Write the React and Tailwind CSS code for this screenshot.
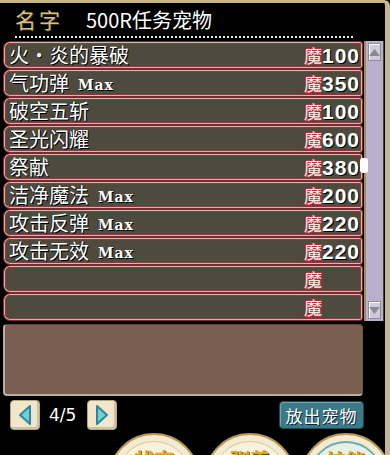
import React from "react";

const skills = [
  { name: "火・炎的暴破", max: false, mp: "100" },
  { name: "气功弹", max: true, mp: "350" },
  { name: "破空五斩", max: false, mp: "100" },
  { name: "圣光闪耀", max: false, mp: "600" },
  { name: "祭献", max: false, mp: "380" },
  { name: "洁净魔法", max: true, mp: "200" },
  { name: "攻击反弹", max: true, mp: "220" },
  { name: "攻击无效", max: true, mp: "220" },
  { name: "", max: false, mp: "" },
  { name: "", max: false, mp: "" },
];

const cjk = { fontFamily: '"Noto Sans CJK SC", "Noto Sans", sans-serif' };

function SkillRow({ s }) {
  return (
    <div className="h-[28px] flex items-center rounded-l-[7px] rounded-r-[3px] border border-[#7e2830] bg-[#4e4a3d] shadow-[inset_0_0_0_1px_#e2b0b0,inset_0_0_0_2px_#8c3a40] pl-[5px] pr-[4px]">
      <span
        className="text-[20px] leading-none text-white [text-shadow:1px_1px_0_#000,-1px_0_0_#2a2a2a]"
        style={cjk}
      >
        {s.name}
      </span>
      {s.max && (
        <span
          className="ml-[9px] mt-[3px] text-[14px] font-bold leading-none text-white tracking-[1px] [text-shadow:1px_1px_0_#000]"
          style={{ fontFamily: '"DejaVu Serif", serif' }}
        >
          Max
        </span>
      )}
      <div className="ml-auto flex items-center">
        <span
          className="text-[18px] leading-none text-[#fbeaea] [text-shadow:1px_0_0_#b0303a,-1px_0_0_#b0303a,0_1px_0_#b0303a,0_-1px_0_#b0303a]"
          style={cjk}
        >
          魔
        </span>
        <span
          className="w-[36px] text-[21px] font-bold leading-none text-white tracking-[1px] [text-shadow:1px_1px_0_#000]"
          style={{ fontFamily: '"Liberation Sans", sans-serif' }}
        >
          {s.mp}
        </span>
      </div>
    </div>
  );
}

function ArrowBtn({ dir }) {
  return (
    <div className="w-[30px] h-[30px] rounded-[4px] bg-[#efe6cc] border border-[#b8a878] shadow-[inset_-2px_-2px_0_#cfc4a0] flex items-center justify-center">
      <svg width="16" height="22" viewBox="0 0 16 22">
        {dir === "left" ? (
          <path d="M13 2 L3 11 L13 20 Z" fill="#6fd0dc" stroke="#2f8796" strokeWidth="2" strokeLinejoin="round" />
        ) : (
          <path d="M3 2 L13 11 L3 20 Z" fill="#6fd0dc" stroke="#2f8796" strokeWidth="2" strokeLinejoin="round" />
        )}
      </svg>
    </div>
  );
}

function RoundBtn({ label, teal }) {
  return (
    <div className="w-[92px] h-[92px] rounded-full bg-[#f2ead2] border-2 border-[#b89a50] flex items-start justify-center p-[6px] shrink-0">
      <div
        className={
          "w-full h-full rounded-full flex justify-center pt-[8px] " +
          (teal ? "bg-[#e8f0e4] border-2 border-[#6ab0b0]" : "bg-[#f7f1de] border border-[#d8c890]")
        }
      >
        <span
          className="text-[20px] font-bold leading-none text-[#e2a424] [text-shadow:1px_1px_0_#6a4a10]"
          style={cjk}
        >
          {label}
        </span>
      </div>
    </div>
  );
}

export default function App() {
  return (
    <div className="w-[390px] h-[455px] bg-black overflow-hidden">
      <div className="relative w-[390px] h-[455px] border-t-[3px] border-r-[5px] border-[#c6b68a] rounded-tr-[6px] overflow-hidden">
        {/* header */}
        <div className="h-[33px] flex items-center pl-[15px]">
          <span
            className="text-[21px] leading-none text-[#d6c282] tracking-[3px] [text-shadow:1px_1px_0_#3a2e10]"
            style={cjk}
          >
            名字
          </span>
          <span
            className="ml-[23px] text-[20px] leading-none text-white [text-shadow:1px_1px_0_#000]"
            style={cjk}
          >
            500R任务宠物
          </span>
        </div>
        <div className="ml-[15px] w-[338px] border-t-2 border-dotted border-[#e8e8e8]" />

        {/* list + scrollbar */}
        <div className="relative mt-[3px] flex">
          <div className="ml-[3px] w-[360px] flex flex-col">
            {skills.map((s, i) => (
              <SkillRow key={i} s={s} />
            ))}
          </div>
          <div className="ml-[1px] w-[20px] h-[280px] bg-[#b7b1cd] border-l-2 border-[#9c8c62] border-r border-r-[#4a4434] flex flex-col justify-between py-[2px] px-[2px]">
            <div className="h-[18px] bg-[#cfcbdc] border border-[#8e8aa0] shadow-[inset_1px_1px_0_#fff] flex items-center justify-center">
              <svg width="11" height="7" viewBox="0 0 11 7">
                <path d="M5.5 0 L11 7 L0 7 Z" fill="#8a8a8a" />
              </svg>
            </div>
            <div className="h-[18px] bg-[#cfcbdc] border border-[#8e8aa0] shadow-[inset_1px_1px_0_#fff] flex items-center justify-center">
              <svg width="11" height="7" viewBox="0 0 11 7">
                <path d="M0 0 L11 0 L5.5 7 Z" fill="#8a8a8a" />
              </svg>
            </div>
          </div>
          <div className="absolute left-[360px] top-[117px] w-[8px] h-[15px] rounded-[3px] bg-white" />
        </div>

        {/* description */}
        <div className="ml-[3px] mt-[3px] w-[360px] h-[72px] rounded-[4px] bg-[#7a5f50] border-l-2 border-b-2 border-[#b4b0a8] border-t border-t-[#5c4a40] border-r border-r-[#6a5446]" />

        {/* pager */}
        <div className="mt-[4px] flex items-center pl-[10px] pr-[21px]">
          <ArrowBtn dir="left" />
          <span
            className="ml-[9px] w-[38px] text-[17px] leading-none text-white"
            style={{ fontFamily: '"DejaVu Sans", sans-serif' }}
          >
            4/5
          </span>
          <ArrowBtn dir="right" />
          <div className="ml-auto w-[85px] h-[28px] rounded-[4px] bg-[#3b7a86] border border-[#1e4850] shadow-[inset_1px_1px_0_#6aa6b0] flex items-center justify-center">
            <span
              className="text-[17px] leading-none text-white tracking-[1px] [text-shadow:1px_1px_0_#123]"
              style={cjk}
            >
              放出宠物
            </span>
          </div>
        </div>

        {/* round buttons (cut off) */}
        <div className="mt-[3px] flex gap-[4px] pl-[108px]">
          <RoundBtn label="状态" />
          <RoundBtn label="驯养" />
          <RoundBtn label="技能" teal />
        </div>
      </div>
    </div>
  );
}
